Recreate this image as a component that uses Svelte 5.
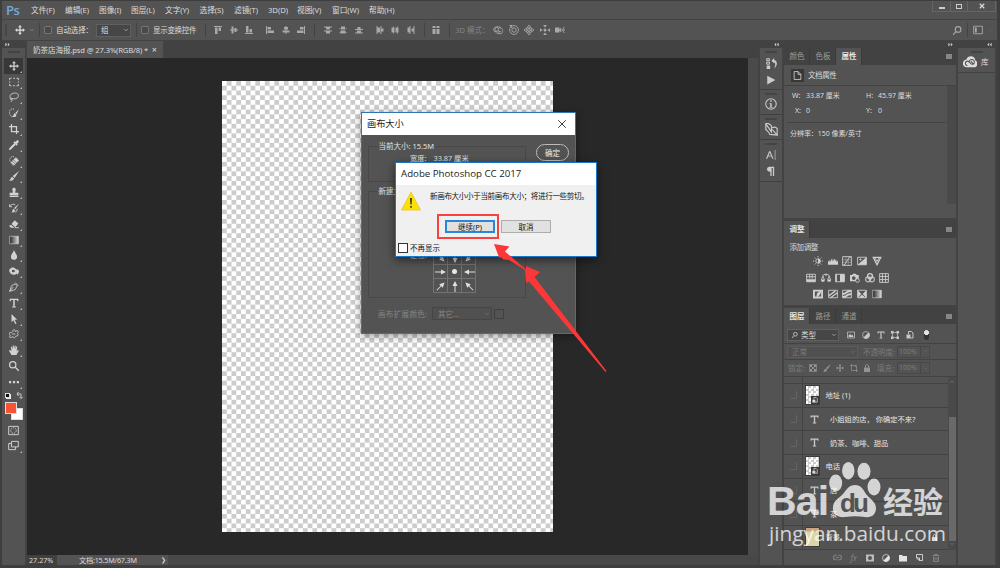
<script>
  const menus = [
    { label: '文件(F)', width: 34 },
    { label: '编辑(E)', width: 34 },
    { label: '图像(I)', width: 32 },
    { label: '图层(L)', width: 34 },
    { label: '文字(Y)', width: 34.5 },
    { label: '选择(S)', width: 34.5 },
    { label: '滤镜(T)', width: 34 },
    { label: '3D(D)', width: 29 },
    { label: '视图(V)', width: 35 },
    { label: '窗口(W)', width: 37 },
    { label: '帮助(H)', width: 34 }
  ];

  const tools = [
    'move', 'marquee', 'lasso', 'quickSelect', 'crop', 'eyedropper', 'heal',
    'brush', 'stamp', 'history', 'eraser', 'gradient', 'blur', 'dodge', 'pen',
    'type', 'arrow', 'shape', 'hand', 'zoom', 'more'
  ];

  const adjustments = [
    ['brightness', 'levels', 'curves', 'exposure', 'vibrance'],
    ['hue', 'balance', 'bw', 'photo', 'mixer', 'lookup'],
    ['invert', 'posterize', 'threshold', 'selective', 'gradient']
  ];

  const layers = [
    { kind: 'smart', name: '地址 (1)' },
    { kind: 'text', name: '小姐姐的店， 你确定不来?' },
    { kind: 'text', name: '奶茶、咖啡、甜品' },
    { kind: 'smart', name: '电话' },
    { kind: 'text', name: '店' },
    { kind: 'text', name: '茶' },
    { kind: 'background', name: '背景', locked: true }
  ];

  const anchors = [45, 90, 135, 0, null, 180, -45, -90, -135];

  // All glyphs are drawn on a 16 x 16 grid
  const icons = {
    move: '<path d="M8 0l3 3.6H9V7h3.4V5L16 8l-3.6 3V9H9v3.4h2L8 16l-3-3.6h2V9H3.6v2L0 8l3.6-3v2H7V3.6H5z"/>',
    marquee: '<path class="l" d="M1 5V2h3M6.500 2h3M12 2h3v3M15 7v2M15 11v3h-3M9.500 14h-3M4 14H1v-3M1 9V7"/>',
    lasso: '<path class="l" d="M4 11C0 9 1 3 7 2c5-1 9 1 8 5s-7 5-11 3c-3-1-2 3 0 2s1 2-1 4"/>',
    quickSelect: '<path class="l dash" d="M8 2C3 0 0 4 1 9s6 6 8 3"/><path d="M16 2l-4 8-2-2zM9 8l3 3c-1 4-4 4-7 3 3-1 2-4 4-6z"/>',
    crop: '<path class="w" d="M4 0v12h12M0 4h12v12"/>',
    eyedropper: '<path d="M10 3l2-2c2-2 5 1 3 3l-2 2 1 1-2 2-5-5 2-2z"/><path class="w" d="M9 6l-7 7-1 2 2-1 7-7"/>',
    heal: '<path d="M3 10l8-8 5 5-8 8z"/><path class="l dash" d="M8 1C2 0-1 6 3 10c1 4 3 5 5 5"/><path stroke="#535353" d="M7 6l5 5M5 8l5 5"/>',
    brush: '<path d="M16 0L9 11 6 8zM5 9l3 3c-1 4-5 4-8 3 3-1 2-4 5-6z"/>',
    stamp: '<path d="M6 7c-4-8 8-8 4 0v2h5v4H1V9h5zM1 14h14v2H1z"/>',
    history: '<path d="M16 1l-6 9-2-2zM7 9l3 3c-1 4-4 3-6 3 2-1 1-4 3-6z"/><path class="l" d="M1 2v4h4M1 6c2-4 6-5 9-3M13 9c0 3-1 5-3 6"/>',
    eraser: '<path d="M9 2l6 5-5 6-6-5zM3 9l6 5H3l-3-3z"/><path class="l" d="M9 14h7"/>',
    gradient: '<defs><linearGradient id="ramp"><stop stop-color="#222"/><stop offset="1" stop-color="#ddd"/></linearGradient></defs><path fill="url(#ramp)" stroke="currentColor" d="M1 2h14v12H1z"/>',
    blur: '<path d="M8 0c1 4 5 7 5 11 0 6-10 6-10 0 0-4 4-7 5-11z"/>',
    dodge: '<path fill-rule="evenodd" d="M1 5c3-4 8-3 10 0 4 0 5 2 5 4l-2 5-2-2c-1 2-3 2-5 2C2 13-1 9 1 5zm5 1c-3 1-1 5 2 4s1-5-2-4z"/>',
    pen: '<path class="l" d="M1 15l3-9 6-3 3 3-3 6zM1 15l6-7M10 1l5 5"/>',
    type: '<path d="M1 1h14v4h-1.500L12.500 3H9.200v10.500H11V15H5v-1.500h1.800V3H3.500l-1 2H1z"/>',
    arrow: '<path d="M4 0l9 9H9l3 6-2 1-3-6-3 3z"/>',
    shape: '<path class="l" d="M6 4c0-4 4-4 4 0 4-3 7 0 3 3 3 2 1 5-2 4-1 4-4 4-5 1-3 3-7 2-4-2-3-3-1-6 2-4zM5 8h5"/>',
    hand: '<path d="M4 16L0 9c1-2 2-1 4 1L3 3c1-2 2 0 3 4V1c1-2 2 0 2 5l1-5c2-1 2 1 1 6l2-5c2 0 1 3 0 8l2-2c3 0 1 2-2 8z"/>',
    zoom: '<circle class="w" cx="6" cy="6" r="5"/><path class="w" d="M10 10l6 6"/>',
    more: '<path d="M0 6.500h3.500V10H0zM6.300 6.500h3.500V10H6.300zM12.500 6.500H16V10h-3.500z"/>',
    mask: '<path class="l" d="M1 2h14v12H1z"/><circle class="l dash" cx="8" cy="8" r="4"/>',
    screen: '<path class="l" d="M5 2h10v8H5zM5 5H1v9h10v-4"/>',
    top: '<path d="M0 0h16v2H0zM2 3h5v13H2zM9 3h5v7H9z"/>',
    middle: '<path d="M0 7h16v2H0zM3 1h4v14H3zM9 4h4v8H9z"/>',
    bottom: '<path d="M0 14h16v2H0zM2 0h5v13H2zM9 6h5v7H9z"/>',
    left: '<path d="M0 0h2v16H0zM3 2h7v5H3zM3 9h13v5H3z"/>',
    center: '<path d="M7 0h2v16H7zM4 2h8v5H4zM1 9h14v4H1z"/>',
    right: '<path d="M14 0h2v16h-2zM6 2h7v5H6zM0 9h13v5H0z"/>',
    distTop: '<path d="M0 1h16v2H0zM4 3h8v4H4zM0 9h16v2H0zM4 11h8v4H4z"/>',
    distMid: '<path d="M0 4h16v1H0zM4 1h8v6H4zM0 12h16v1H0zM3 9h10v6H3z"/>',
    distBottom: '<path d="M5 2h6v4H5zM0 6h16v2H0zM4 9h8v4H4zM0 13h16v2H0z"/>',
    distLeft: '<path d="M1 0h2v16H1zM3 3h5v10H3zM9 0h2v16H9zM11 5h4v6h-4z"/>',
    distCenter: '<path d="M4 0h1v16H4zM1 3h6v10H1zM12 0h1v16h-1zM9 3h6v10H9z"/>',
    distRight: '<path d="M5 0h2v16H5zM1 3h4v10H1zM13 0h2v16h-2zM9 5h4v6H9z"/>',
    autoAlign: '<path d="M1 0h6v4H1zM9 0h6v4H9zM1 6h6v10H1zM9 6h6v10H9z"/>',
    orbit: '<path class="l" d="M6 10C0 11-1 6 3 4s8-2 9 1M9 5c5-2 8 3 6 7s-7 1-6-2l4 1M3 10l3 3 5 1"/><circle class="l" cx="6" cy="7" r="3"/>',
    roll: '<circle class="l" cx="8" cy="8" r="7"/><circle class="l" cx="8" cy="8" r="3.500"/><path d="M0 0h5v5z"/>',
    pan: '<path class="l" d="M8 0l3 4H9v3h3V5l4 3-4 3V9H9v3h2l-3 4-3-4h2V9H4v2L0 8l4-3v2h3V4H5z"/>',
    slide: '<path d="M8 5l3 3-3 3-3-3zM5 0h6L8 4zM5 16h6l-3-4zM0 5v6l4-3zM16 5v6l-4-3z"/>',
    camera: '<path d="M0 4h7v8H0zM7 7l3-3v8L7 9z"/><path class="l" d="M15 3l-3 5 3 5M12 8h4"/>',
    search: '<circle class="w" cx="9" cy="6" r="5"/><path class="w" d="M5 10l-5 6"/>',
    workspace: '<path class="l" d="M1 2h14v12H1z"/><path d="M3 4h3v8H3z"/>',
    chevron: '<path class="l" d="M3 5l5 5 5-5"/>',
    chevronUp: '<path class="l" d="M3 10l5-5 5 5"/>',
    historyPanel: '<path class="l" d="M1 1h4v3H1zM1 6h4v3H1z"/><path d="M1 11h5v5H1zM8 4l4-4v3c5 1 5 8 0 12 2-5 2-8 0-9v2z"/>',
    play: '<path d="M2 1l13 7-13 7z"/>',
    info: '<circle class="l" cx="8" cy="8" r="7"/><path d="M7 3h2v2H7zM6 7h3v5h1v1H6v-1h1V8H6z"/>',
    clone: '<path class="l" d="M1 1l7 10V4C6 0 1 0 1 1v7c2 2 4 3 5 6l9 1V7c-2-3-5-2-6-1M9 8l6 7V8"/>',
    character: '<path d="M0 14L5 2h2l5 12h-2L8.700 10.500H3.300L2 14zM4 9h4L6 4zM14 0h1v16h-1z"/>',
    paragraph: '<path d="M13 1v15h-2V3H9v13H7V9C0 9 0 1 6 1z"/>',
    document: '<path class="l" d="M2 1h7l5 5v9H2zM9 1v5h5"/>',
    brightness: '<path d="M8 4a4 4 0 010 8z"/><circle class="l" cx="8" cy="8" r="3.500"/><path class="l" d="M8 0v2M8 14v2M0 8h2M14 8h2M2.500 2.500L4 4M12 12l1.500 1.500M13.500 2.500L12 4M4 12l-1.500 1.500"/>',
    levels: '<path d="M0 14V9l1-2 1 3 1-5 1 4 2-5 1 5 1-6 1 5 2-4 1 4 1-3 1 5 1-3 1 2v5z"/>',
    curves: '<path class="l" d="M1 1h14v14H1z"/><path class="h" d="M1 6h14M1 10h14M6 1v14M10 1v14"/><path class="l" d="M1 15C8 14 8 2 15 1"/>',
    exposure: '<path class="l" d="M1 2h14v12H1z"/><path d="M15 2v12H1zM3 5h5v1H3zM5 3h1v5H5z"/>',
    vibrance: '<path class="w" d="M2 2h12L8 14z"/><path class="l" d="M5 3l3 6 3-6"/>',
    hue: '<path class="l" d="M1 2h14v12H1zM6 2v7M10 2v7M1 6h14"/><path d="M1 10h14v4H1z"/>',
    balance: '<path class="l" d="M8 1v4M2 5c3-4 9-4 12 0M3 5l-2.500 6h5zM13 5l-2.500 6h5z"/><path d="M0 11h6l-1 3H1zM10 11h6l-1 3h-4z"/>',
    bw: '<path class="l" d="M1 2h14v12H1z"/><path d="M1 2h2v12H1zM8 2h7v12H8z"/>',
    photo: '<path fill-rule="evenodd" d="M0 3h3l2-2h4l2 2h3v6c-4-1-5 1-5 4H0zm6 2a3 3 0 100 6 3 3 0 000-6z"/><circle class="l" cx="12" cy="12" r="3"/>',
    mixer: '<circle class="w" cx="8" cy="5" r="4"/><circle class="w" cx="5" cy="10" r="4" opacity=".8"/><circle class="w" cx="11" cy="10" r="4" opacity=".8"/>',
    lookup: '<path class="l" d="M1 1h14v14H1zM5.500 1v14M10.500 1v14M1 5.500h14M1 10.500h14"/>',
    invert: '<path fill-rule="evenodd" d="M0 1h16v14H0zm3 3v8h3C5 7 8 5 11 4zm10 0v8H7c3-1 5-3 6-8z"/>',
    posterize: '<path class="l" d="M1 2h14v12H1z"/><path class="w" d="M1 11L12 3M4 14L15 6"/>',
    threshold: '<path class="l" d="M1 2h14v12H1z"/><path class="t" d="M1 8l4-1 5-3 5-1M1 13l4-1 5-3 5-1"/>',
    selective: '<path class="l" d="M1 2h14v12H1z"/><path d="M1 2l6 6-6 6zM15 2L9 8l6 6zM2 14l6-5 6 5z"/>',
    image: '<path class="l" d="M1 2h14v12H1z"/><path d="M3 12V9l3-3 3 3 2-2 2 5z"/>',
    adjust: '<circle class="l" cx="8" cy="8" r="7"/><path d="M13 3a7 7 0 01-10 10z"/>',
    vector: '<path class="l" d="M3 3h10v10H3z"/><path d="M0 0h5v5H0zM11 0h5v5h-5zM0 11h5v5H0zM11 11h5v5h-5z"/>',
    smart: '<path class="w" d="M5 6V1h6l3 3v10H9"/><path d="M1 7h8v8H1z"/>',
    checker: '<path class="l" d="M1 1h14v14H1z"/><path d="M2 2h4v4H2zM10 2h4v4h-4zM6 6h4v4H6zM2 10h4v4H2zM10 10h4v4h-4z"/>',
    artboard: '<path class="l" d="M3 0v13h13M0 3h13v13M9 3l4 4"/>',
    lock: '<path d="M2 7h12v9H2z"/><path class="w" d="M5 7V4c0-4 6-4 6 0v3"/>',
    link: '<path class="w" d="M7 4H4c-4 0-4 8 0 8h3M9 4h3c4 0 4 8 0 8H9M5 8h6"/>',
    addMask: '<path fill-rule="evenodd" d="M0 1h16v14H0zm8 3a4 4 0 100 8 4 4 0 000-8z"/>',
    folder: '<path d="M0 2h6l2 2h8v11H0z"/>',
    newLayer: '<path class="w" d="M1 1h14v14H8L1 9zM1 9h7v6"/>',
    trash: '<path class="w" d="M1 3h14M5 3V1h6v2M3 5v10h10V5M6 6v7M10 6v7"/>',
    cloud: '<path d="M4 14c-6 0-5-9 0-9C5 0 14 0 14 6c4 2 3 8-1 8z"/><path fill="none" stroke="#535353" stroke-width="1.2" d="M5 12c-3 0-3-5 0-5 2 0 3 2 4 3s4 1 4-2-4-4-6-1M9 7l3 4"/>',
    close: '<path class="l" d="M2 2l12 12M14 2L2 14"/>',
    closeBold: '<path class="t" d="M2 2l12 12M14 2L2 14"/>',
    rewind: '<path d="M7 2v12L1 8zM15 2v12L9 8z"/>',
    forward: '<path d="M1 2v12l6-6zM9 2v12l6-6z"/>'
  };
</script>

{#snippet icon(name, size = 10)}
  <svg class="icon" viewBox="0 0 16 16" width={size} height={size}>{@html icons[name]}</svg>
{/snippet}

<div class="app">
  <header class="menubar">
    <span class="logo">Ps</span>
    <nav>
      {#each menus as menu}
        <span class="menu" style="width: {menu.width}px">{menu.label}</span>
      {/each}
    </nav>
    <div class="window-buttons">
      <span><i class="minimize"></i></span>
      <span><i class="maximize"></i></span>
      <span class="wide">{@render icon('closeBold', 6)}</span>
    </div>
  </header>

  <div class="options">
    <i class="bar-grip"></i>
    <span class="current-tool">{@render icon('move', 10)}</span>
    <span class="tool-chevron">{@render icon('chevron', 6)}</span>
    <i class="sep"></i>
    <i class="check"></i>
    <span class="auto-select">自动选择：</span>
    <span class="select">组 {@render icon('chevron', 6)}</span>
    <i class="sep"></i>
    <i class="check"></i>
    <span class="show-transform">显示变换控件</span>
    <i class="sep"></i>
    <div class="icon-group">{#each ['top', 'middle', 'bottom'] as name}<span>{@render icon(name, 8)}</span>{/each}</div>
    <div class="icon-group">{#each ['left', 'center', 'right'] as name}<span>{@render icon(name, 8)}</span>{/each}</div>
    <i class="sep"></i>
    <div class="icon-group">{#each ['distTop', 'distMid', 'distBottom'] as name}<span>{@render icon(name, 8)}</span>{/each}</div>
    <div class="icon-group">{#each ['distLeft', 'distCenter', 'distRight'] as name}<span>{@render icon(name, 8)}</span>{/each}</div>
    <i class="sep"></i>
    <div class="icon-group single"><span>{@render icon('autoAlign', 8)}</span></div>
    <i class="sep"></i>
    <span class="mode">3D 模式：</span>
    <div class="icon-group">{#each ['orbit', 'roll', 'pan', 'slide', 'camera'] as name}<span>{@render icon(name, 10)}</span>{/each}</div>
    <div class="options-right">
      {@render icon('search', 9)}
      <i class="sep"></i>
      {@render icon('workspace', 10)}
      <span class="faint">{@render icon('chevron', 6)}</span>
    </div>
  </div>

  <div class="workspace">
    <aside class="toolbar">
      <div class="collapse start">{@render icon('forward', 5)}</div>
      <div class="tool-list">
        <i class="grip"></i>
        {#each tools as tool, i}
          <div class="tool" class:selected={i === 0} class:corner={tool !== 'zoom'}>{@render icon(tool, 10)}</div>
        {/each}
        <div class="swap"><i class="default-colors"></i><svg width="7" height="7" viewBox="0 0 7 7"><path d="M1 2h4v4M2.500 0L1 2l1.500 2M3.500 5L5 6.500 6.500 5" fill="none" stroke="#c8c8c8" /></svg></div>
        <div class="swatches"><i class="back"></i><i class="front"></i></div>
        <div class="tool">{@render icon('mask', 11)}</div>
        <div class="tool corner">{@render icon('screen', 11)}</div>
      </div>
    </aside>

    <main>
      <div class="doc-tabs">
        <div class="doc-tab"><span class="doc-name">奶茶店海报.psd @ 27.3%(RGB/8) *</span><span class="doc-close">×</span></div>
      </div>
      <div class="stage">
        <div class="viewport"><div class="canvas"></div></div>
        <div class="stage-scroll"></div>
      </div>
      <footer class="status">
        <span class="percent">27.27%</span>
        <span class="size">文档:15.5M/67.3M</span>
        <span class="more">❯</span>
      </footer>
    </main>

    <aside class="dock">
      <div class="collapse">{@render icon('rewind', 5)}</div>
      <div class="dock-group tall"><i class="grip"></i>{@render icon('historyPanel', 11)}{@render icon('play', 10)}</div>
      <div class="dock-group"><i class="grip"></i>{@render icon('info', 12)}</div>
      <div class="dock-group"><i class="grip"></i>{@render icon('clone', 13)}</div>
      <div class="dock-group tall"><i class="grip"></i>{@render icon('character', 10)}{@render icon('paragraph', 10)}</div>
    </aside>

    <aside class="panels">
      <div class="collapse">{@render icon('forward', 5)}</div>
      <section class="properties">
        <div class="tabs"><span>颜色</span><span>色板</span><span class="active">属性</span><i class="panel-menu"></i></div>
        <div class="prop-title"><span class="doc-icon">{@render icon('document', 9)}</span>文档属性</div>
        <div class="prop-body">
          <div class="prop-grid">
            <span>W:</span><span>33.87 厘米</span><span>H:</span><span>45.97 厘米</span>
            <span class="inset">X:</span><span>0</span><span>Y:</span><span>0</span>
          </div>
          <p>分辨率：150 像素/英寸</p>
          <i class="prop-scroll"></i>
        </div>
      </section>

      <section class="adjustments">
        <div class="tabs"><span class="active">调整</span><i class="panel-menu"></i></div>
        <p>添加调整</p>
        {#each adjustments as row}
          <div class="adjust-row" class:shifted={row.length === 6}>
            {#each row as name}<span>{@render icon(name, 10)}</span>{/each}
          </div>
        {/each}
      </section>

      <section class="layers">
        <div class="tabs"><span class="active">图层</span><span>路径</span><span class="last">通道</span><i class="panel-menu"></i></div>
        <div class="filter-row">
          <span class="select">{@render icon('search', 6)}<b>类型</b>{@render icon('chevron', 6)}</span>
          <div class="filter-icons">{#each ['image', 'adjust', 'type', 'vector', 'smart'] as name}<span>{@render icon(name, 8)}</span>{/each}</div>
          <i class="toggle"></i>
        </div>
        <div class="blend-row">
          <span class="select blend">正常{@render icon('chevron', 6)}</span>
          <span class="field-label">不透明度:</span>
          <span class="number">100%</span><span class="number-arrow">{@render icon('chevron', 5)}</span>
        </div>
        <div class="lock-row">
          <span class="lock-label">锁定:</span>
          <div class="lock-icons">{#each ['checker', 'brush', 'move', 'artboard', 'lock'] as name}<span>{@render icon(name, 8)}</span>{/each}</div>
          <span class="field-label">填充:</span>
          <span class="number">100%</span><span class="number-arrow">{@render icon('chevron', 5)}</span>
        </div>
        <div class="layer-area">
          <div class="layer-list">
            <div class="layer partial"><span class="eye"></span></div>
            {#each layers as layer}
              <div class="layer">
                <span class="eye"><i></i></span>
                <span class="thumb-cell" class:glyph={layer.kind === 'text'}>
                  {#if layer.kind === 'text'}
                    {@render icon('type', 9)}
                  {:else if layer.kind === 'smart'}
                    <span class="thumb checkered"><b>{@render icon('smart', 6)}</b></span>
                  {:else}
                    <span class="thumb art"></span>
                  {/if}
                </span>
                <span class="layer-name" class:text={layer.kind === 'text'}>{layer.name}</span>
                {#if layer.locked}<span class="locked">{@render icon('lock', 7)}</span>{/if}
              </div>
            {/each}
          </div>
          <div class="layer-scroll">
            {@render icon('chevronUp', 6)}
            <i></i>
            {@render icon('chevron', 6)}
          </div>
        </div>
        <div class="layer-footer">
          <span class="dim">{@render icon('link', 9)}</span>
          <span class="dim fx">fx</span>
          <span>{@render icon('addMask', 8)}</span>
          <span class="bright">{@render icon('adjust', 8)}</span>
          <span class="bright">{@render icon('folder', 8)}</span>
          <span class="bright">{@render icon('newLayer', 7)}</span>
          <span class="dim">{@render icon('trash', 8)}</span>
        </div>
      </section>
    </aside>

    <aside class="libraries">
      <div class="collapse">{@render icon('rewind', 5)}</div>
      <div class="library"><i class="grip"></i><div>{@render icon('cloud', 14)}<span>库</span></div></div>
    </aside>
  </div>

  <div class="dialog canvas-size">
    <div class="dialog-title"><span>画布大小</span>{@render icon('close', 10)}</div>
    <div class="dialog-body">
      <div class="groups">
        <fieldset class="current">
          <legend>当前大小: 15.5M</legend>
          <p>宽度:<span>33.87 厘米</span></p>
        </fieldset>
        <fieldset class="new">
          <legend>新建大小: 15.5M</legend>
          <div class="anchor">
            <span>定位:</span>
            <div class="anchor-grid">
              {#each anchors as angle}
                <i>
                  {#if angle === null}
                    <b></b>
                  {:else}
                    <svg viewBox="0 0 12 12" width="12" height="12"><g transform="rotate({angle} 6 6)"><path d="M0 5.500h6V3.500L11 6 6 8.500v-2H0z" fill="#e0e0e0" /></g></svg>
                  {/if}
                </i>
              {/each}
            </div>
          </div>
        </fieldset>
        <div class="extension"><span>画布扩展颜色:</span><span class="select">其它...{@render icon('chevron', 6)}</span><i></i></div>
      </div>
      <button class="pill">确定</button>
    </div>
  </div>

  <div class="dialog alert">
    <div class="dialog-title">Adobe Photoshop CC 2017</div>
    <div class="alert-body">
      <div class="message">
        <svg width="20" height="20" viewBox="0 0 20 20"><path d="M10 1L19.500 19H.5z" fill="#fde100" stroke="#e8c020" stroke-width=".7" /><path d="M9 7h2l-.4 6.500H9.400zM9.200 15h1.600v1.700H9.200z" fill="#333" /></svg>
        <span>新画布大小小于当前画布大小；将进行一些剪切。</span>
      </div>
      <div class="actions">
        <div class="highlight"><button class="primary">继续(P)</button></div>
        <button>取消</button>
      </div>
      <label><i></i>不再显示</label>
    </div>
  </div>

  <svg class="pointer" width="120" height="136" viewBox="490 240 120 136">
    <path d="M494 244l15.500 2.500-4.500 5 21 18 0-3.500 14 6-5.500 5L606.500 371 605.500 372 529 281.500l-3 1.500-1-13-16-10-5.500-.5-3-2.500-1 1.500z" fill="#fb3737" />
  </svg>

  <div class="watermark">
    <div class="brand">
      <span class="bai">Bai</span>
      <svg class="paw" width="54" height="58" viewBox="0 0 54 58">
        <ellipse cx="6.700" cy="22" rx="6.500" ry="8.500" />
        <ellipse cx="19.300" cy="9.700" rx="6.200" ry="8.700" />
        <ellipse cx="35" cy="10.300" rx="6.500" ry="8.500" />
        <ellipse cx="45" cy="26" rx="6.500" ry="8.500" />
        <path d="M26 24c6 0 8 4 11 9 4 5 10 8 10 14 0 7-5 10-11 9-7-1-13-1-20 0C9 57 3 53 4 46c0-6 6-9 10-13 4-5 6-9 12-9z" />
        <text x="11" y="51" textLength="29">du</text>
      </svg>
      <span class="jingyan">经验</span>
    </div>
    <div class="url">jingyan.baidu.com</div>
  </div>
</div>

<style>
  :global(body) {
    margin: 0;
    background: #535353;
  }

  .app, .app :global(*) {
    box-sizing: border-box;
  }

  .app {
    position: relative;
    width: 1000px;
    height: 568px;
    overflow: hidden;
    display: flex;
    flex-direction: column;
    background: #535353;
    border: solid #3e3e3e;
    border-width: 1px 3px 3px 2px;
    color: #dcdcdc;
    font: 7.5px/10px "Noto Sans", "Noto Sans CJK SC", sans-serif;
    white-space: nowrap;
  }

  p {
    margin: 0;
  }

  i, b {
    display: block;
    font-style: normal;
    flex: none;
  }

  b {
    font-weight: 400;
  }

  .icon {
    display: block;
    flex: none;
    fill: currentColor;
  }

  .icon :global(.h), .icon :global(.l), .icon :global(.w), .icon :global(.t) {
    fill: none;
    stroke: currentColor;
    stroke-width: 1.4;
  }

  .icon :global(.h) {
    stroke-width: 0.6;
  }

  .icon :global(.w) {
    stroke-width: 2;
  }

  .icon :global(.t) {
    stroke-width: 3;
  }

  .icon :global(.dash) {
    stroke-dasharray: 2 1.5;
  }

  /* Menu bar */
  .menubar {
    height: 19px;
    flex: none;
    display: flex;
    align-items: center;
    border-bottom: 1px solid #434343;
  }

  .logo {
    width: 29px;
    padding-left: 4px;
    color: #74a9dc;
    font: 600 13px/16px "Open Sans", sans-serif;
    letter-spacing: -0.5px;
  }

  nav {
    display: flex;
  }

  .menu {
    flex: none;
    font-size: 7.700px;
    letter-spacing: -0.05px;
  }

  .window-buttons {
    align-self: flex-start;
    display: flex;
    margin-left: auto;
    margin-right: 1px;
    height: 11px;
    border: 1px solid #656565;
    border-top: 0;
  }

  .window-buttons span {
    width: 17px;
    display: grid;
    place-items: center;
  }

  .window-buttons span + span {
    border-left: 1px solid #656565;
  }

  .window-buttons .wide {
    width: 28px;
  }

  .minimize {
    width: 6px;
    height: 2px;
    margin-top: 3px;
    background: #ccc;
  }

  .maximize {
    width: 6px;
    height: 5px;
    border: 1.5px solid #ccc;
  }

  /* Options bar */
  .options {
    height: 21px;
    flex: none;
    display: flex;
    align-items: center;
    border-bottom: 1px solid #434343;
    color: #a9a9a9;
  }

  .bar-grip {
    width: 2px;
    height: 12px;
    margin-left: 3px;
    background: #484848;
  }

  .current-tool {
    margin-left: 8px;
    color: #ddd;
  }

  .tool-chevron {
    margin: 0 4px 0 4px;
  }

  .sep {
    width: 1px;
    height: 14px;
    background: #434343;
  }

  .check {
    width: 8px;
    height: 8px;
    margin-left: 4px;
    border: 1px solid #737373;
    border-radius: 1px;
    background: #4a4a4a;
  }

  .auto-select, .show-transform {
    margin-left: 4px;
    width: 40px;
    color: #dcdcdc;
    letter-spacing: -0.1px;
  }

  .show-transform {
    width: 51.500px;
    letter-spacing: -0.3px;
  }

  .select {
    display: flex;
    align-items: center;
    justify-content: space-between;
    background: #464646;
    border: 1px solid #606060;
  }

  .options > .select {
    width: 35px;
    height: 13px;
    margin-right: 5px;
    padding: 0 1px 0 4px;
    color: #dcdcdc;
  }

  .icon-group {
    display: flex;
    padding-left: 5px;
  }

  .icon-group span {
    width: 15.6px;
    display: grid;
    place-items: center;
  }

  .icon-group + .sep {
    margin-left: 5px;
  }

  .mode {
    width: 35px;
    margin-left: 5px;
    color: #858585;
  }

  .mode + .icon-group {
    padding-left: 0;
  }

  .icon-group.single {
    padding-left: 4px;
  }

  .options-right {
    margin-left: auto;
    display: flex;
    align-items: center;
    gap: 5px;
    padding-right: 3px;
  }

  .faint {
    color: #656565;
  }

  /* Columns */
  .workspace {
    flex: 1;
    min-height: 0;
    display: grid;
    grid-template-columns: 23px 731px 22px 172px 37px;
    column-gap: 2px;
    background: #434343;
  }

  .workspace > * {
    min-width: 0;
    display: flex;
    flex-direction: column;
  }

  .collapse {
    height: 7px;
    flex: none;
    display: flex;
    justify-content: flex-end;
    padding: 1px 3.500px 0 3px;
    background: #424242;
    color: #c8c8c8;
  }

  .collapse.start {
    justify-content: flex-start;
  }

  .grip {
    width: 12px;
    height: 2px;
    background: #444;
  }

  .tool-list {
    flex: 1;
    padding-top: 3px;
    display: flex;
    flex-direction: column;
    align-items: center;
    background: #535353;
    color: #d2d2d2;
  }

  .tool-list .grip {
    margin-bottom: 5px;
  }

  .tool {
    position: relative;
    flex: none;
    width: 19px;
    height: 15.8px;
    display: grid;
    place-items: center;
  }

  .tool.selected {
    background: #383838;
    border-radius: 1px;
  }

  .tool.corner::after {
    content: "";
    position: absolute;
    right: 1px;
    bottom: 1px;
    border: solid transparent;
    border-width: 1px;
    border-right-color: #bbb;
    border-bottom-color: #bbb;
  }

  .swap {
    width: 18px;
    height: 12.500px;
    display: flex;
    justify-content: space-between;
    align-items: center;
  }

  .default-colors {
    width: 5px;
    height: 5px;
    background: #111;
    border: 1px solid #ddd;
    box-shadow: 1px 1px 0 #eee;
  }

  .swatches {
    width: 18px;
    height: 18px;
    margin-bottom: 2px;
    display: grid;
    grid-template-columns: 6px 6px 6px;
    grid-template-rows: 6px 6px 6px;
  }

  .front, .back {
    border: 1px solid #ddd;
  }

  .front {
    grid-area: 1 / 1 / 3 / 3;
    background: #fa5334;
  }

  .back {
    grid-area: 2 / 2 / 4 / 4;
    background: #fff;
  }

  .doc-tabs {
    height: 17px;
    flex: none;
    display: flex;
    background: #424242;
  }

  .doc-tab {
    width: 136px;
    display: flex;
    align-items: center;
    padding: 0 6px;
    background: #535353;
    justify-content: space-between;
  }

  .doc-name {
    font-size: 7.6px;
    letter-spacing: -0.12px;
  }

  .doc-close {
    font-size: 9px;
  }

  .stage {
    flex: 1;
    display: flex;
  }

  .viewport {
    width: 721px;
    padding: 23px 0 0 194.5px;
    background: #282828;
  }

  .canvas {
    width: 331.5px;
    height: 450.5px;
    background: repeating-conic-gradient(#ccc 0 25%, #fff 0 50%) 0 0 / 9.52px 9.52px;
  }

  .stage-scroll {
    flex: 1;
    background: #4a4a4a;
  }

  .status {
    height: 10px;
    flex: none;
    display: flex;
    background: #484848;
    font-size: 7.2px;
  }

  .percent {
    width: 30px;
    padding-left: 2px;
    background: #404040;
  }

  .size {
    width: 100px;
    padding-left: 22px;
    background: #535353;
    letter-spacing: -0.2px;
  }

  .status .more {
    width: 11px;
    padding-left: 4px;
    background: #535353;
    font-size: 6px;
  }

  /* Dock */
  .dock, .libraries {
    background: #535353;
  }

  .dock-group {
    height: 25px;
    flex: none;
    display: flex;
    flex-direction: column;
    align-items: center;
    border-bottom: 1px solid #404040;
    padding-top: 3px;
    gap: 4px;
    color: #ccc;
  }

  .dock-group.tall {
    height: 42px;
    gap: 6px;
  }

  .dock-group .grip + .icon {
    margin-top: -1px;
  }

  .library {
    height: 25px;
    border-bottom: 1px solid #434343;
    display: flex;
    flex-direction: column;
    align-items: center;
    padding-top: 3px;
  }

  .library div {
    width: 100%;
    display: flex;
    align-items: center;
    gap: 4px;
    padding: 2px 0 0 5px;
  }

  /* Panels */
  section {
    background: #535353;
  }

  .tabs {
    height: 17px;
    display: flex;
    align-items: stretch;
    background: #424242;
    color: #9c9c9c;
  }

  .tabs span {
    width: 26px;
    padding: 3px 0 0 5.500px;
    border-right: 1px solid #3b3b3b;
    letter-spacing: -0.1px;
  }

  .tabs .active {
    background: #535353;
    color: #e4e4e4;
    font-weight: 600;
  }

  .panel-menu {
    width: 6px;
    height: 5px;
    margin: 6px 4px 0 auto;
    background: #868686;
  }

  .properties {
    height: 170px;
    flex: none;
  }

  .prop-title {
    height: 21px;
    display: flex;
    align-items: center;
    gap: 4px;
    padding-left: 7px;
    border-bottom: 1px solid #434343;
    letter-spacing: -0.4px;
  }

  .doc-icon {
    width: 13px;
    height: 13px;
    display: grid;
    place-items: center;
    background: #383838;
  }

  .prop-body {
    display: grid;
    grid-template-columns: 162px 9px;
    grid-template-rows: 37px 81px;
    column-gap: 1px;
    font-size: 7px;
  }

  .prop-grid {
    margin-left: 3px;
    padding: 5px 0 0 5px;
    border-bottom: 1px solid #434343;
    display: grid;
    grid-template-columns: 14px 60px 12px 60px;
    grid-template-rows: 15px 15px;
  }

  .prop-grid .inset {
    padding-left: 3px;
  }

  .prop-body p {
    grid-row: 2;
    padding: 6px 0 0 6px;
    letter-spacing: -0.05px;
  }

  .prop-scroll {
    grid-area: 1 / 2 / 3 / 3;
    background: #4a4a4a;
  }

  .adjustments {
    height: 84px;
    flex: none;
    margin-top: 3px;
  }

  .adjustments p {
    height: 15px;
    padding: 4px 0 0 5.500px;
    letter-spacing: -0.4px;
  }

  .adjust-row {
    height: 16.400px;
    display: flex;
    align-items: center;
    padding-left: 27px;
    color: #d0d0d0;
  }

  .adjust-row.shifted {
    padding-left: 20px;
  }

  .adjust-row span {
    width: 14.600px;
    display: grid;
    place-items: center;
  }

  .layers {
    flex: 1;
    min-height: 0;
    margin-top: 3px;
    display: flex;
    flex-direction: column;
  }

  .layers .tabs {
    height: 16px;
    flex: none;
  }

  .filter-row, .blend-row, .lock-row {
    flex: none;
    display: flex;
    align-items: center;
    border-bottom: 1px solid #434343;
    padding-left: 3px;
  }

  .filter-row {
    height: 20px;
    padding-top: 2px;
  }

  .filter-row .select {
    width: 52px;
    height: 12px;
    padding: 0 1px 0 4px;
    gap: 3px;
  }

  .filter-row .select b {
    flex: 1;
  }

  .filter-icons {
    display: flex;
    margin-left: 5px;
  }

  .filter-icons span {
    width: 14.700px;
    display: grid;
    place-items: center;
    color: #c8c8c8;
  }

  .toggle {
    width: 5px;
    height: 10px;
    margin-left: 7px;
    border-radius: 3px;
    background: radial-gradient(circle at 2.5px 2.5px, #e4e4e4 2.3px, #333 2.8px);
  }

  .blend-row {
    height: 16px;
    color: #7b7b7b;
  }

  .blend {
    width: 71px;
    height: 12px;
    padding: 0 1px 0 4px;
    border-color: #5c5c5c;
    background: #505050;
  }

  .blend-row .field-label {
    width: 39px;
    padding-left: 5px;
  }

  .number, .number-arrow {
    height: 12px;
    border: 1px solid #484848;
    line-height: 10px;
    padding-left: 1px;
    font-size: 7px;
  }

  .number {
    width: 24px;
  }

  .number-arrow {
    width: 9px;
    display: grid;
    place-items: center;
    border-left: 0;
  }

  .lock-row {
    height: 17px;
    color: #7b7b7b;
  }

  .lock-label {
    width: 19.500px;
    padding-left: 1px;
  }

  .lock-icons {
    display: flex;
    color: #949494;
  }

  .lock-icons span {
    width: 13.500px;
    display: grid;
    place-items: center;
  }

  .lock-row .field-label {
    width: 23px;
    padding-left: 3px;
  }

  .layer-area {
    height: 173px;
    flex: none;
    display: flex;
    overflow: hidden;
  }

  .layer-list {
    width: 164px;
  }

  .layer {
    height: 23.700px;
    display: flex;
    align-items: center;
    border-bottom: 1px solid #434343;
  }

  .layer.partial {
    height: 7px;
  }

  .eye {
    align-self: stretch;
    width: 19px;
    display: grid;
    place-items: center;
    border-right: 1px solid #434343;
  }

  .eye i {
    width: 7px;
    height: 8px;
    border: solid #636363;
    border-width: 0 1px 1px 0;
  }

  .thumb-cell {
    width: 18px;
    display: grid;
    place-items: center;
  }

  .thumb-cell.glyph {
    padding-left: 4px;
    color: #c8c8c8;
  }

  .thumb {
    width: 15px;
    height: 20px;
    border: 1px solid #3c3c3c;
    display: grid;
    place-items: end;
  }

  .checkered {
    background: repeating-conic-gradient(#ccc 0 25%, #fff 0 50%) 0 0 / 5px 5px;
  }

  .thumb b {
    padding: 1px;
    background: #383838;
  }

  .art {
    background: linear-gradient(#c9a67e 0 3px, #dcd7a8 4px);
  }

  .layer-name {
    padding-left: 4.500px;
    color: #e6e6e6;
    font-size: 7.300px;
  }

  .layer-name.text {
    padding-left: 9px;
  }

  .locked {
    margin-left: auto;
    margin-right: 10px;
  }

  .layer-scroll {
    width: 8px;
    display: flex;
    flex-direction: column;
    align-items: center;
    padding: 2px 0 3px;
    background: #4a4a4a;
    color: #8a8a8a;
  }

  .layer-scroll i {
    width: 7px;
    height: 124px;
    margin: auto 0 0;
    background: #696969;
  }

  .layer-footer {
    flex: 1;
    display: flex;
    padding-left: 45px;
  }

  .layer-footer span {
    width: 16.400px;
    display: grid;
    place-items: center;
    color: #bbb;
  }

  .layer-footer .bright {
    color: #e4e4e4;
  }

  .layer-footer .dim {
    color: #818181;
  }

  .fx {
    font: italic 8px "Noto Sans", sans-serif;
  }

  /* Dialogs float above the document */
  .dialog {
    position: absolute;
    border: 1px solid #2d76b5;
    box-shadow: 0 2px 8px rgba(0, 0, 0, 0.4);
  }

  .dialog-title {
    display: flex;
    align-items: center;
    justify-content: space-between;
    background: #fff;
    color: #222;
  }

  .canvas-size {
    left: 359px;
    top: 111px;
    width: 215px;
    height: 222px;
    background: #535353;
  }

  .canvas-size .dialog-title {
    height: 22px;
    padding: 0 8px 0 5px;
    font-size: 9.200px;
  }

  .dialog-body {
    display: flex;
    padding: 6px 0 0 6px;
    color: #e0e0e0;
  }

  .groups {
    width: 158px;
  }

  fieldset {
    min-width: 0;
    margin: 0;
    padding: 0;
    border: 1px solid #484848;
  }

  legend {
    margin-left: 7.500px;
    padding: 0 2px;
    line-height: 11px;
  }

  .current {
    height: 41px;
  }

  .current p {
    padding-left: 41px;
    line-height: 12px;
    font-size: 7.300px;
  }

  .current p span {
    padding-left: 7px;
  }

  .new {
    height: 112px;
    margin-top: 4px;
  }

  .anchor {
    display: flex;
    padding: 53px 0 0 41px;
  }

  .anchor > span {
    width: 23px;
  }

  .anchor-grid {
    display: grid;
    grid-template-columns: repeat(3, 14px);
    grid-auto-rows: 14px;
    border: 1px solid #727272;
    border-width: 1px 0 0 1px;
  }

  .anchor-grid i {
    display: grid;
    place-items: center;
    border: solid #727272;
    border-width: 0 1px 1px 0;
  }

  .anchor-grid b {
    width: 5px;
    height: 5px;
    border-radius: 50%;
    background: #e8e8e8;
  }

  .extension {
    display: flex;
    align-items: center;
    margin-top: 9px;
    padding-left: 10px;
    color: #858585;
  }

  .extension > span:first-child {
    width: 54px;
    letter-spacing: 0.35px;
  }

  .extension .select {
    width: 60px;
    height: 13px;
    padding: 0 1px 0 5px;
    background: #505050;
    border-color: #454545;
  }

  .extension i {
    width: 10px;
    height: 10px;
    margin-left: 2px;
    border: 1px solid #3f3f3f;
  }

  .pill {
    width: 33px;
    height: 17px;
    margin: 3px 0 0 10px;
    padding: 0;
    border: 1px solid #bbb;
    border-radius: 9px;
    background: none;
    color: #eee;
    font: inherit;
  }

  .alert {
    left: 393px;
    top: 161px;
    width: 202px;
    height: 95px;
    background: #f0f0f0;
    border-color: #1877c9;
    box-shadow: 0 3px 9px rgba(0, 0, 0, 0.55);
  }

  .alert .dialog-title {
    height: 22px;
    padding-left: 5px;
    font: 9.7px/22px "Open Sans", "Noto Sans", sans-serif;
  }

  .alert-body {
    color: #111;
  }

  .message {
    height: 29px;
    display: flex;
    padding: 6px 0 0 5px;
    gap: 9px;
  }

  .message span {
    letter-spacing: -0.3px;
  }

  .actions {
    display: flex;
    align-items: center;
    padding-left: 41px;
    gap: 2px;
  }

  .highlight {
    padding: 4px 2px 4px 6px;
    border: 2px solid #fb4040;
  }

  .actions button {
    display: block;
    width: 50px;
    height: 13px;
    padding: 0;
    border: 1px solid #adadad;
    background: #e1e1e1;
    color: #111;
    font: inherit;
    line-height: 10px;
  }

  .actions .primary {
    border: 2px solid #2b87d6;
    line-height: 8px;
  }

  label {
    display: flex;
    align-items: center;
    gap: 2px;
    margin: 4px 0 0 2px;
  }

  label i {
    width: 10px;
    height: 10px;
    border: 1px solid #333;
    background: #fff;
  }

  .pointer {
    position: absolute;
    left: 488px;
    top: 239px;
  }

  .watermark {
    position: absolute;
    left: 765px;
    top: 460px;
    width: 190px;
    color: #fff;
    opacity: 0.75;
  }

  .brand {
    display: flex;
    height: 58px;
  }

  .bai {
    width: 62px;
    padding-top: 20px;
    font: 700 41px/40px "Liberation Sans", sans-serif;
    letter-spacing: -0.8px;
  }

  .paw {
    flex: none;
    fill: #fff;
  }

  .paw text {
    fill: #555;
    font: 700 26px "Liberation Sans", sans-serif;
  }

  .jingyan {
    padding: 21px 0 0;
    font: 700 30px/36px "Noto Sans CJK SC", sans-serif;
  }

  .url {
    padding: 1px 0 0 2px;
    font: 20.8px/26px "Open Sans", sans-serif;
  }
</style>
